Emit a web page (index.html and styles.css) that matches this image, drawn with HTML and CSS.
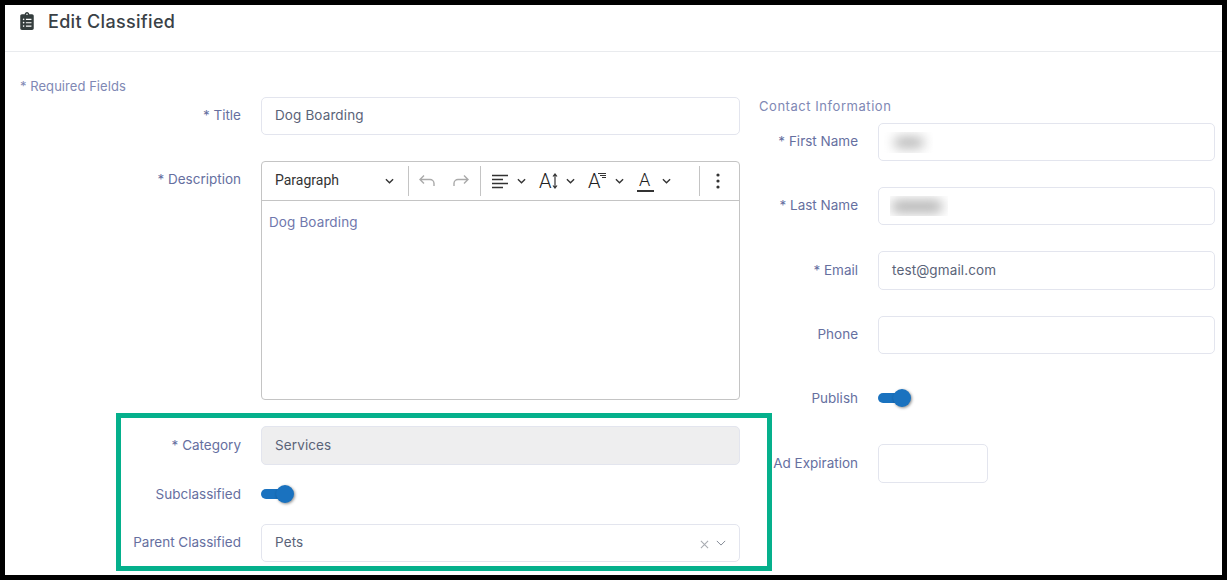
FILE: index.html
```html
<!DOCTYPE html>
<html lang="en">
<head>
<meta charset="utf-8">
<title>Edit Classified</title>
<link rel="stylesheet" href="styles.css">
</head>
<body>
<div class="frame">
  <header class="head">
    <svg class="head-icon" viewBox="0 0 384 512"><path d="M336 64h-80c0-35.3-28.7-64-64-64s-64 28.7-64 64H48C21.5 64 0 85.5 0 112v352c0 26.5 21.5 48 48 48h288c26.5 0 48-21.5 48-48V112c0-26.5-21.5-48-48-48zM96 424c-13.3 0-24-10.7-24-24s10.7-24 24-24 24 10.7 24 24-10.7 24-24 24zm0-96c-13.3 0-24-10.7-24-24s10.7-24 24-24 24 10.7 24 24-10.7 24-24 24zm0-96c-13.3 0-24-10.7-24-24s10.7-24 24-24 24 10.7 24 24-10.7 24-24 24zm96-192c13.3 0 24 10.7 24 24s-10.7 24-24 24-24-10.7-24-24 10.7-24 24-24zm128 368c0 4.4-3.6 8-8 8H168c-4.4 0-8-3.6-8-8v-16c0-4.4 3.6-8 8-8h144c4.4 0 8 3.6 8 8v16zm0-96c0 4.4-3.6 8-8 8H168c-4.4 0-8-3.6-8-8v-16c0-4.4 3.6-8 8-8h144c4.4 0 8 3.6 8 8v16zm0-96c0 4.4-3.6 8-8 8H168c-4.4 0-8-3.6-8-8v-16c0-4.4 3.6-8 8-8h144c4.4 0 8 3.6 8 8v16z"/></svg>
    <h1 class="head-title">Edit Classified</h1>
  </header>
  <main class="form">
    <section class="col-left">
      <p class="required-note">* Required Fields</p>
      <div class="row row-title">
        <label class="label">* Title</label>
        <div class="field">Dog Boarding</div>
      </div>
      <div class="row row-top row-editor">
        <label class="label label-editor">* Description</label>
        <div class="editor">
          <div class="toolbar">
            <span class="tb-para">Paragraph</span>
            <svg class="chev tb-chev-para" viewBox="0 0 10 6"><path d="M1 1l4 4 4-4"/></svg>
            <i class="sep sep-1"></i>
            <svg class="tb-icon tb-undo" viewBox="0 0 20 20"><path d="M7 4.5L3 8.5l4 4M3 8.5h10a4 4 0 0 1 4 4v2.500"/></svg>
            <svg class="tb-icon tb-redo" viewBox="0 0 20 20"><path d="M13 4.500l4 4-4 4M17 8.500H7a4 4 0 0 0-4 4v2.500"/></svg>
            <i class="sep sep-2"></i>
            <svg class="tb-icon tb-dark tb-align" viewBox="0 0 17 15"><path d="M0 1.500h16M0 5.500h11M0 9.500h16M0 13.500h11"/></svg>
            <svg class="chev" viewBox="0 0 10 6"><path d="M1 1l4 4 4-4"/></svg>
            <span class="tb-glyph tb-a-size">A<svg class="tb-arrow" viewBox="0 0 6 16"><path d="M3 1v14M1 3.500L3 1l2 2.500M1 12.500L3 15l2-2.500"/></svg></span>
            <svg class="chev" viewBox="0 0 10 6"><path d="M1 1l4 4 4-4"/></svg>
            <span class="tb-glyph tb-a-lines">A<svg class="tb-lines" viewBox="0 0 8 6"><path d="M0 .5h8M2 2.500h6M4 4.500h4"/></svg></span>
            <svg class="chev" viewBox="0 0 10 6"><path d="M1 1l4 4 4-4"/></svg>
            <span class="tb-glyph tb-a-color">A</span>
            <svg class="chev" viewBox="0 0 10 6"><path d="M1 1l4 4 4-4"/></svg>
            <i class="sep sep-3"></i>
            <svg class="tb-dots" viewBox="0 0 4 16"><circle cx="2" cy="2" r="1.600"/><circle cx="2" cy="8" r="1.600"/><circle cx="2" cy="14" r="1.600"/></svg>
          </div>
          <div class="editor-body">Dog Boarding</div>
        </div>
      </div>
      <div class="row row-category">
        <label class="label">* Category</label>
        <div class="field field-disabled">Services</div>
      </div>
      <div class="row row-sub">
        <label class="label">Subclassified</label>
        <span class="toggle"></span>
      </div>
      <div class="row row-parent">
        <label class="label">Parent Classified</label>
        <div class="field field-select">
          <span>Pets</span>
          <span class="select-icons">
            <svg class="sel-x" viewBox="0 0 10 10"><path d="M1 1l8 8M9 1l-8 8"/></svg>
            <svg class="sel-chev" viewBox="0 0 12 7"><path d="M1 1l5 5 5-5"/></svg>
          </span>
        </div>
      </div>
    </section>
    <section class="col-right">
      <p class="contact-title">Contact Information</p>
      <div class="row">
        <label class="label label-r">* First Name</label>
        <div class="field"><span class="blur-box blur-box-first"><span class="blur blur-first"></span></span></div>
      </div>
      <div class="row row-gap">
        <label class="label label-r">* Last Name</label>
        <div class="field"><span class="blur-box blur-box-last"><span class="blur blur-last"></span></span></div>
      </div>
      <div class="row row-gap">
        <label class="label label-r">* Email</label>
        <div class="field field-39">test@gmail.com</div>
      </div>
      <div class="row row-gap">
        <label class="label label-r">Phone</label>
        <div class="field"></div>
      </div>
      <div class="row row-publish">
        <label class="label label-r">Publish</label>
        <span class="toggle"></span>
      </div>
      <div class="row row-expire">
        <label class="label label-r">Ad Expiration</label>
        <div class="field field-39 field-short"></div>
      </div>
    </section>
  </main>
  <div class="highlight"></div>
</div>
</body>
</html>
```

FILE: styles.css
```css
* { box-sizing: border-box; }
html, body { margin: 0; padding: 0; }
body {
  width: 1227px;
  height: 580px;
  overflow: hidden;
  font-family: Inter, "Liberation Sans", sans-serif;
  font-size: 13.5px;
  color: #666f9f;
}
.frame {
  position: relative;
  width: 1227px;
  height: 580px;
  border: 5px solid #000;
  background: #fff;
  overflow: hidden;
}
.head {
  display: flex;
  align-items: flex-start;
  height: 47px;
  padding: 7px 0 0 15px;
  border-bottom: 1px solid #e9ebee;
}
.head-icon { width: 14px; height: 18px; fill: #343d3d; flex: none; }
.head-title {
  margin: -1px 0 0 14px;
  font-size: 18px;
  line-height: 22px;
  font-weight: 500;
  letter-spacing: .32px;
  color: #3a4146;
}
.form { display: flex; }
.col-left { width: 750px; flex: none; }
.col-right { flex: 1; padding: 44px 0 0 0; }
.required-note {
  margin: 24px 0 1px 15px;
  line-height: 20px;
  font-size: 13px;
  letter-spacing: .05px;
  color: #8088b4;
}
.contact-title {
  margin: 0 0 7px 4px;
  line-height: 20px;
  font-size: 13px;
  letter-spacing: .55px;
  color: #8088b4;
}
.row { display: flex; align-items: center; gap: 20px; }
.row-top { align-items: flex-start; }
.label { width: 236px; flex: none; margin-top: -2px; text-align: right; line-height: 20px; white-space: nowrap; }
.label-r { width: 103px; }
.label-editor { margin-top: 8px; }
.row-sub .label, .row-publish .label { margin-top: 0; }
.row-editor { margin-top: 26px; }
.row-category { margin-top: 26px; }
.row-sub { margin-top: 19px; height: 20px; }
.row-parent { margin-top: 20px; }
.row-gap { margin-top: 26px; }
.row-publish { margin-top: 34px; height: 20px; }
.row-expire { margin-top: 36px; }
.field {
  display: flex;
  align-items: center;
  width: 479px;
  height: 38px;
  padding: 0 13px 2px;
  border: 1px solid #e3e5ee;
  border-radius: 5px;
  background: #fff;
  letter-spacing: .12px;
  color: #5a6378;
}
.col-right .field { width: 337px; }
.field-39 { height: 39px; }
.col-right .field-short { width: 110px; }
.field-disabled { height: 39px; background: #eeeeef; }
.field-select { justify-content: space-between; }
.select-icons { display: flex; align-items: center; gap: 7px; margin-top: 4px; }
.sel-x { width: 9px; height: 9px; fill: none; stroke: #a9acb2; stroke-width: 1.2; }
.sel-chev { width: 10px; height: 6px; fill: none; stroke: #6b7280; stroke-width: 1; margin-top: -3px; }
.blur-box { display: block; flex: none; overflow: hidden; background: #fff; }
.blur-box-first { width: 49px; height: 21px; margin: 2px 0 0 -8px; padding: 5px 0 0 10px; }
.blur-box-last { width: 58px; height: 20px; margin: 1px 0 0 -2px; padding: 4px 0 0 1px; }
.blur { display: block; background: #b4b4b4; border-radius: 7px; filter: blur(6px); }
.blur-first { width: 30px; height: 11px; }
.blur-last { width: 52px; height: 13px; }
.toggle { position: relative; display: block; width: 33px; height: 20px; flex: none; }
.toggle::before {
  content: "";
  position: absolute;
  left: 0; top: 5px;
  width: 26px; height: 10px;
  border-radius: 5px;
  background: #1a72bf;
}
.toggle::after {
  content: "";
  position: absolute;
  left: 15px; top: 1px;
  width: 18px; height: 18px;
  border-radius: 50%;
  background: #1a72bf;
  box-shadow: 1px 1px 3px rgba(0,0,0,.45);
}
.editor {
  width: 479px;
  height: 239px;
  border: 1px solid #c4c4c4;
  border-radius: 4px;
}
.toolbar {
  position: relative;
  display: flex;
  align-items: center;
  height: 39px;
  padding-left: 13px;
  border-bottom: 1px solid #c4c4c4;
}
.tb-para { width: 110px; padding-bottom: 2px; font-family: Roboto, sans-serif; font-size: 14px; color: #333; }
.chev { width: 9px; height: 6px; flex: none; fill: none; stroke: #333; stroke-width: 1.500; }
.sep { display: block; width: 1px; height: 30px; flex: none; background: #c4c4c4; }
.sep-1 { margin-left: 14px; }
.sep-2 { margin-left: 9px; }
.sep-3 { margin-left: 28px; }
.tb-icon { flex: none; fill: none; stroke: #aaa; stroke-width: 1.400; }
.tb-undo { width: 20px; height: 20px; margin-left: 8px; }
.tb-redo { width: 20px; height: 20px; margin-left: 14px; }
.tb-dark { stroke: #333; }
.tb-align { width: 17px; height: 15px; margin: 0 8px 0 11px; }
.tb-glyph {
  position: relative;
  display: block;
  flex: none;
  font-family: Roboto, sans-serif;
  font-size: 20px;
  line-height: 20px;
  font-weight: 300;
  color: #222;
}
.tb-a-size { width: 19px; margin: 0 8px 0 13px; }
.tb-arrow {
  position: absolute;
  left: 13px; top: 2px;
  width: 6px; height: 16px;
  fill: none; stroke: #333; stroke-width: 1.200;
}
.tb-a-lines { width: 19px; margin: 0 8px 0 13px; }
.tb-lines {
  position: absolute;
  left: 10px; top: 2px;
  width: 8px; height: 6px;
  fill: none; stroke: #333; stroke-width: 1;
}
.tb-a-color { width: 17px; margin: 0 8px 0 13px; border-bottom: 2px solid #333; font-size: 18px; padding-left: 2px; }
.tb-dots { width: 4px; height: 16px; flex: none; margin-left: 16px; fill: #333; }
.editor-body {
  padding: 11px 7px;
  line-height: 20px;
  letter-spacing: .12px;
  color: #7078ad;
}
.highlight {
  position: absolute;
  left: 111px; top: 408px;
  width: 656px; height: 158px;
  border: 5px solid #05b08c;
  pointer-events: none;
}
```
